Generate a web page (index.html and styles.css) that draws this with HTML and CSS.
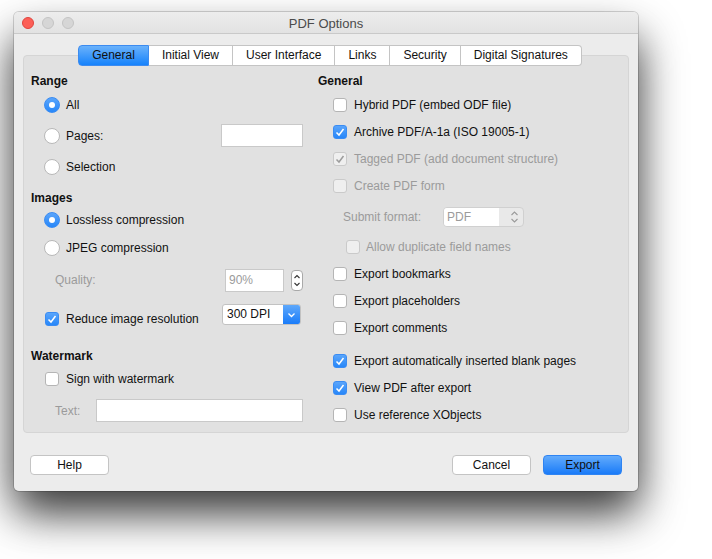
FILE: index.html
```html
<!DOCTYPE html>
<html>
<head>
<meta charset="utf-8">
<title>PDF Options</title>
<link rel="stylesheet" href="styles.css">
</head>
<body>
<div class="window">
  <div class="titlebar">
    <div class="lights"><span class="light red"></span><span class="light"></span><span class="light"></span></div>
    <div class="title">PDF Options</div>
    <div></div>
  </div>
  <div class="content">
    <div class="tabs">
      <div class="tab active">General</div>
      <div class="tab">Initial View</div>
      <div class="tab">User Interface</div>
      <div class="tab">Links</div>
      <div class="tab">Security</div>
      <div class="tab">Digital Signatures</div>
    </div>
    <div class="panel">
      <div class="col left">
        <div class="heading">Range</div>
        <div class="row r31"><span class="radio on"></span><span>All</span></div>
        <div class="row r31"><span class="radio"></span><span>Pages:</span><span class="field pages"></span></div>
        <div class="row r31"><span class="radio"></span><span>Selection</span></div>
        <div class="heading mt8">Images</div>
        <div class="row r28"><span class="radio on"></span><span>Lossless compression</span></div>
        <div class="row r28"><span class="radio"></span><span>JPEG compression</span></div>
        <div class="row r36">
          <span class="label dim">Quality:</span>
          <span class="field quality dim">90%</span>
          <span class="spinner">
            <svg width="10" height="19" viewBox="0 0 10 19"><polyline points="2.5,7 5,4.5 7.5,7" fill="none" stroke="#333" stroke-width="1.1"/><polyline points="2.5,12 5,14.5 7.5,12" fill="none" stroke="#333" stroke-width="1.1"/></svg>
          </span>
        </div>
        <div class="row reduce">
          <span class="cb lcb on"><svg width="12" height="12" viewBox="0 0 12 12"><polyline points="2.5,6.5 5,9 9.5,3" fill="none" stroke="#fff" stroke-width="1.5"/></svg></span>
          <span class="lbl14">Reduce image resolution</span>
          <span class="dpi"><span class="dpi-text">300 DPI</span><span class="dpi-btn"><svg width="9" height="6" viewBox="0 0 9 6"><polyline points="1.5,1.5 4.5,4.5 7.5,1.5" fill="none" stroke="#fff" stroke-width="1.3"/></svg></span></span>
        </div>
        <div class="heading mt22">Watermark</div>
        <div class="row r30"><span class="cb lcb"></span><span>Sign with watermark</span></div>
        <div class="row r34"><span class="label dim">Text:</span><span class="field wtext"></span></div>
      </div>
      <div class="col right">
        <div class="heading">General</div>
        <div class="row rr"><span class="cb rcb"></span><span>Hybrid PDF (embed ODF file)</span></div>
        <div class="row rr"><span class="cb rcb on"><svg width="12" height="12" viewBox="0 0 12 12"><polyline points="2.5,6.5 5,9 9.5,3" fill="none" stroke="#fff" stroke-width="1.5"/></svg></span><span>Archive PDF/A-1a (ISO 19005-1)</span></div>
        <div class="row rr dim"><span class="cb rcb off"><svg width="12" height="12" viewBox="0 0 12 12"><polyline points="2.5,6.5 5,9 9.5,3" fill="none" stroke="#9c9c9c" stroke-width="1.5"/></svg></span><span>Tagged PDF (add document structure)</span></div>
        <div class="row rr dim"><span class="cb rcb off"></span><span>Create PDF form</span></div>
        <div class="row rr mt4 dim">
          <span class="sublabel">Submit format:</span>
          <span class="combo"><span class="combo-text">PDF</span><span class="combo-btn"><svg width="9" height="14" viewBox="0 0 9 14"><polyline points="1.5,5 4.5,2 7.5,5" fill="none" stroke="#9a9a9a" stroke-width="1.1"/><polyline points="1.5,9 4.5,12 7.5,9" fill="none" stroke="#9a9a9a" stroke-width="1.1"/></svg></span></span>
        </div>
        <div class="row rr mt3 dim"><span class="cb acb off"></span><span>Allow duplicate field names</span></div>
        <div class="row rr"><span class="cb rcb"></span><span>Export bookmarks</span></div>
        <div class="row rr"><span class="cb rcb"></span><span>Export placeholders</span></div>
        <div class="row rr"><span class="cb rcb"></span><span>Export comments</span></div>
        <div class="row rr mt6"><span class="cb rcb on"><svg width="12" height="12" viewBox="0 0 12 12"><polyline points="2.5,6.5 5,9 9.5,3" fill="none" stroke="#fff" stroke-width="1.5"/></svg></span><span>Export automatically inserted blank pages</span></div>
        <div class="row rr"><span class="cb rcb on"><svg width="12" height="12" viewBox="0 0 12 12"><polyline points="2.5,6.5 5,9 9.5,3" fill="none" stroke="#fff" stroke-width="1.5"/></svg></span><span>View PDF after export</span></div>
        <div class="row rr"><span class="cb rcb"></span><span>Use reference XObjects</span></div>
      </div>
    </div>
  </div>
  <div class="footer">
    <div class="btn help">Help</div>
    <div class="btn">Cancel</div>
    <div class="btn primary">Export</div>
  </div>
</div>
</body>
</html>
```
FILE: styles.css
```css
html, body {
  height: 100%;
}

body {
  margin: 0;
  background: #fff;
  font-family: "Liberation Sans", Arial, sans-serif;
  font-size: 12px;
  color: #111;
}

.window {
  position: relative;
  z-index: 0;
  margin: 12px 0 0 14px;
  width: 624px;
  height: 479px;
  background: #ececec;
  border-radius: 5px;
  box-shadow: 0 0 0 1px rgba(0, 0, 0, 0.16), 0 24px 48px rgba(0, 0, 0, 0.42);
  display: flex;
  flex-direction: column;
}

/* soft drop shadow under the window */
.window::before {
  content: "";
  position: absolute;
  left: 4px;
  right: 4px;
  top: 30px;
  bottom: -16px;
  border-radius: 10px;
  background: rgba(0, 0, 0, 0.62);
  filter: blur(20px);
  z-index: -1;
}

.window::after {
  content: "";
  position: absolute;
  inset: 0;
  border-radius: 5px;
  background: #ececec;
  z-index: -1;
}

.titlebar {
  height: 21px;
  border-bottom: 1px solid #c9c9c9;
  border-radius: 5px 5px 0 0;
  background: linear-gradient(#ededed, #e2e2e2);
  display: grid;
  grid-template-columns: 1fr auto 1fr;
  align-items: center;
}

.lights {
  display: flex;
  gap: 8px;
  padding-left: 8px;
  padding-top: 1px;
}

.light {
  width: 12px;
  height: 12px;
  box-sizing: border-box;
  border-radius: 50%;
  background: #d6d6d6;
  border: 1px solid #c4c4c4;
}

.light.red {
  background: #fc5f57;
  border-color: #e0443e;
}

.title {
  font-size: 13px;
  color: #4b4b4b;
  padding-top: 2px;
}

.content {
  padding: 11px 9px 0;
}

.tabs {
  display: flex;
  justify-content: center;
  height: 21px;
  padding-left: 8px;
  position: relative;
  z-index: 1;
}

.tab {
  padding: 0 13px;
  line-height: 19px;
  background: #fff;
  border: 1px solid #c4c4c4;
  border-left: none;
}

.tab:first-child {
  border-left: 1px solid #c4c4c4;
  border-radius: 4px 0 0 4px;
}

.tab:last-child {
  border-radius: 0 4px 4px 0;
}

.tab.active {
  background: linear-gradient(#6ab2fb, #1682fb);
  border-color: #3c8bf0;
}

.panel {
  margin-top: -11px;
  height: 378px;
  box-sizing: border-box;
  background: #e1e1e1;
  border: 1px solid #d5d5d5;
  border-radius: 4px;
  padding: 17px 0 0 7px;
  display: grid;
  grid-template-columns: 287px 1fr;
}

.col {
  display: flex;
  flex-direction: column;
}

.left {
  padding-right: 15px;
}

.right {
  gap: 5px;
}

.heading {
  height: 16px;
  line-height: 16px;
  font-weight: bold;
}

.row {
  display: flex;
  align-items: center;
}

.r31 { height: 31px; }
.r28 { height: 28px; }
.r36 { height: 36px; }
.r30 { height: 30px; }
.r34 { height: 33px; }
.rr { height: 22px; }

.mt3 { margin-top: 3px; }
.mt4 { margin-top: 4px; }
.mt6 { margin-top: 6px; }
.mt8 { margin-top: 8px; }
.mt22 { margin-top: 22px; }

.dim { color: #9b9b9b; }

.radio {
  width: 16px;
  height: 16px;
  box-sizing: border-box;
  border-radius: 50%;
  background: #fff;
  border: 1px solid #b8b8b8;
  margin: 0 6px 0 13px;
  display: flex;
  align-items: center;
  justify-content: center;
}

.radio.on {
  background: linear-gradient(#5aa5fb, #2787f9);
  border-color: #3a8cf3;
}

.radio.on::after {
  content: "";
  width: 6px;
  height: 6px;
  border-radius: 50%;
  background: #fff;
}

.cb {
  width: 14px;
  height: 14px;
  box-sizing: border-box;
  border-radius: 3px;
  background: #fff;
  border: 1px solid #b5b5b5;
  display: flex;
  align-items: center;
  justify-content: center;
  flex: none;
}

.cb.on {
  background: linear-gradient(#5aa5fb, #2787f9);
  border-color: #3a8cf3;
}

.cb.off {
  background: #efefef;
  border-color: #cacaca;
}

.lcb { margin: 0 7px 0 14px; }
.rcb { margin: 0 7px 0 15px; }
.acb { margin: 0 6px 0 28px; }

.field {
  background: #fff;
  border: 1px solid #c9c9c9;
  box-sizing: border-box;
  height: 23px;
}

.pages {
  width: 82px;
  margin-left: auto;
}

.label {
  padding-left: 24px;
}

.quality {
  width: 59px;
  margin-left: auto;
  line-height: 21px;
  padding-left: 3px;
}

.spinner {
  width: 12px;
  height: 21px;
  box-sizing: border-box;
  margin-left: 7px;
  border: 1px solid #a9a9a9;
  border-radius: 4px;
  background: #fff;
  display: flex;
  align-items: center;
  justify-content: center;
}

.reduce {
  margin-top: 6px;
  height: 22px;
  align-items: flex-end;
}

.lbl14 {
  line-height: 14px;
}

.dpi {
  align-self: flex-start;
  margin-left: auto;
  margin-right: 2px;
  width: 79px;
  height: 21px;
  box-sizing: border-box;
  border: 1px solid #c2c2c2;
  border-radius: 3px;
  background: #fff;
  display: flex;
  overflow: hidden;
}

.dpi-text {
  flex: 1;
  padding-left: 4px;
  line-height: 19px;
}

.dpi-btn {
  width: 17px;
  background: linear-gradient(#5ea8fb, #1a7cf9);
  display: flex;
  align-items: center;
  justify-content: center;
}

.wtext {
  width: 207px;
  margin-left: auto;
}

.sublabel {
  width: 100px;
  padding-left: 25px;
  flex: none;
}

.combo {
  width: 81px;
  height: 20px;
  box-sizing: border-box;
  border: 1px solid #d0d0d0;
  border-radius: 4px;
  background: #e9e9e9;
  display: flex;
  overflow: hidden;
}

.combo-text {
  width: 52px;
  background: #fff;
  padding-left: 3px;
  line-height: 18px;
}

.combo-btn {
  flex: 1;
  display: flex;
  align-items: center;
  justify-content: flex-end;
  padding-right: 4px;
}

.footer {
  display: flex;
  gap: 12px;
  padding: 22px 16px 0;
}

.btn {
  width: 79px;
  height: 20px;
  box-sizing: border-box;
  border: 1px solid #c4c4c4;
  border-radius: 4px;
  background: #fff;
  text-align: center;
  line-height: 18px;
}

.btn.help {
  margin-right: auto;
}

.btn.primary {
  background: linear-gradient(#62abfc, #1a7bf8);
  border-color: #2f84f2;
}
```
